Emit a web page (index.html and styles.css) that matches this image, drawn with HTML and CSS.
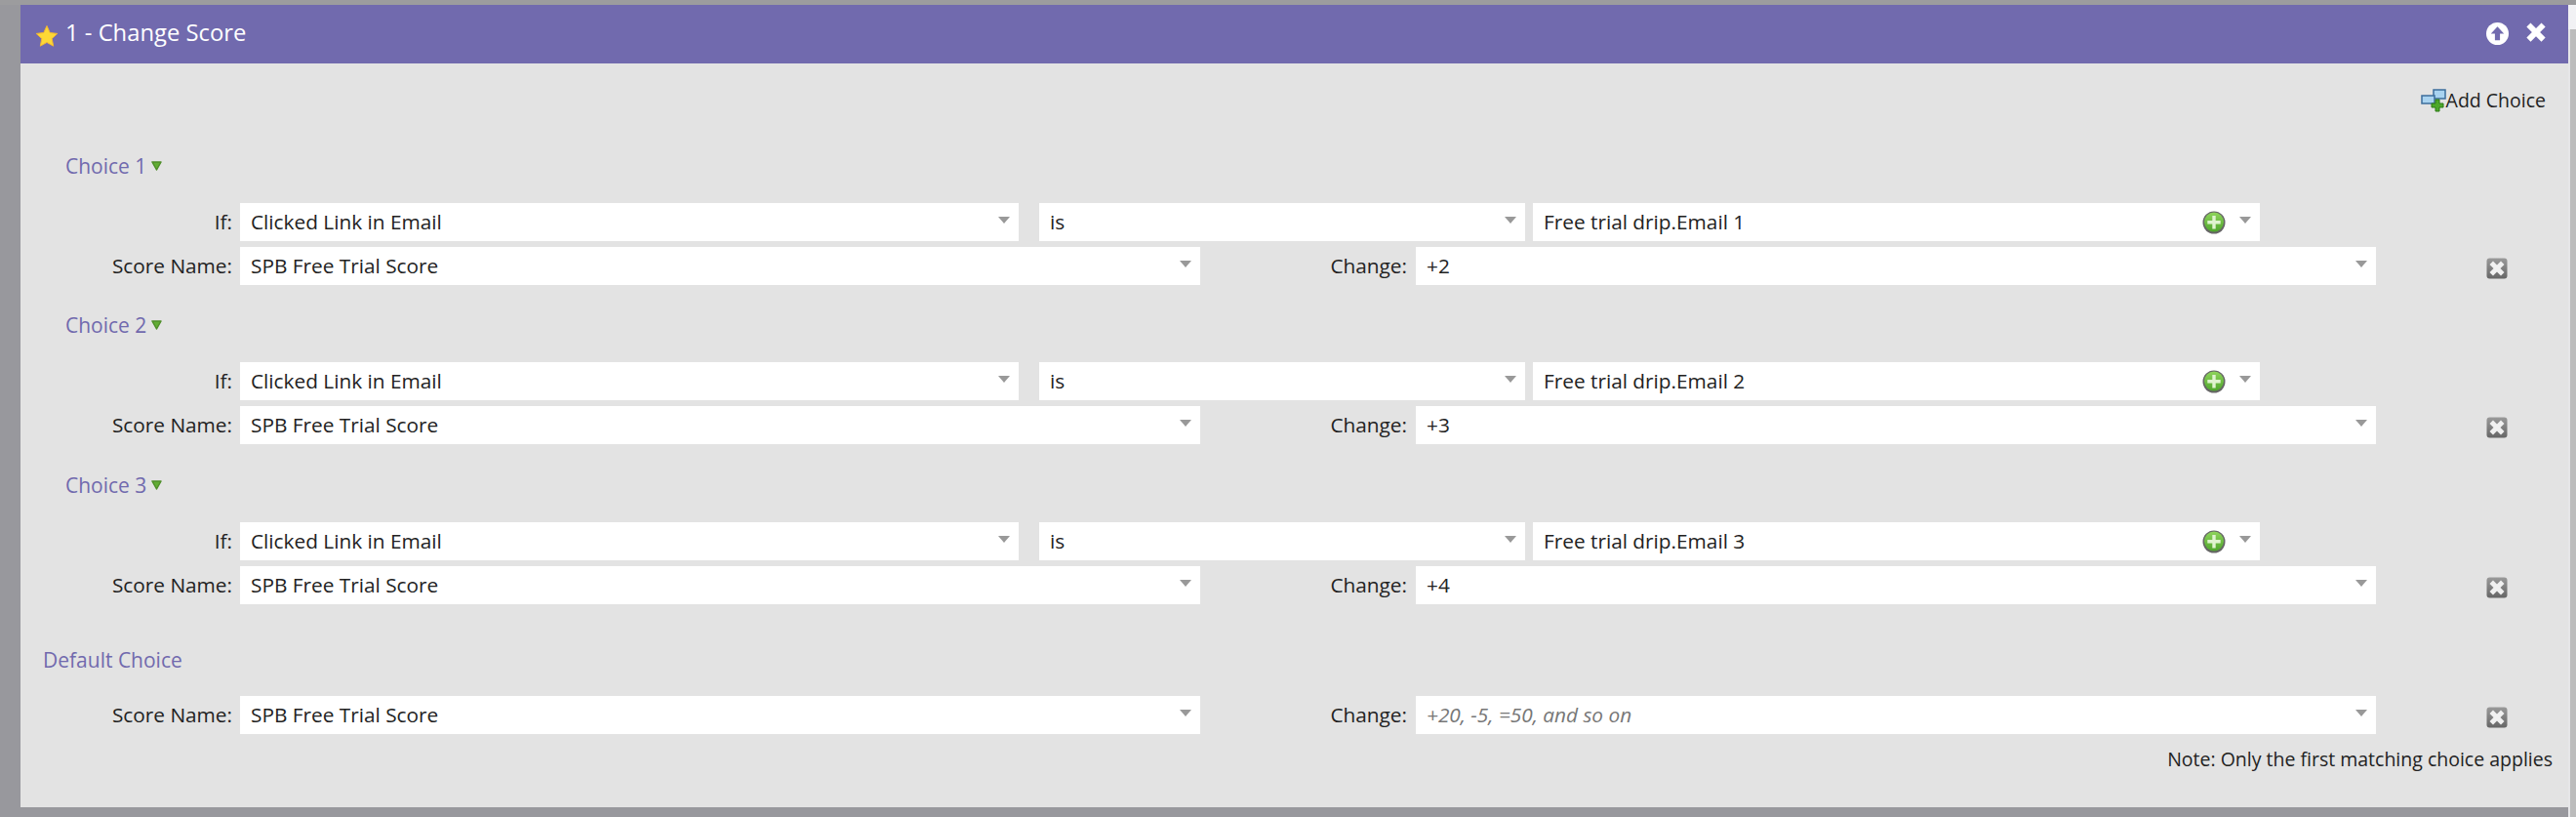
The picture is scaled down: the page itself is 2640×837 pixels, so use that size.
FILE: index.html
```html
<!DOCTYPE html>
<html lang="en">
<head>
<meta charset="utf-8">
<title>Change Score</title>
<link rel="stylesheet" href="styles.css">
</head>
<body>
<svg class="defs" width="0" height="0" aria-hidden="true">
  <defs>
    <linearGradient id="gPlus" x1="0" y1="0" x2="0" y2="1"><stop offset="0" stop-color="#8fd45c"/><stop offset="1" stop-color="#4fa62c"/></linearGradient>
    <linearGradient id="gX" x1="0" y1="0" x2="0" y2="1"><stop offset="0" stop-color="#9a9a9a"/><stop offset="1" stop-color="#666"/></linearGradient>
    <symbol id="caret" viewBox="0 0 12 7"><path d="M0 0H12L6 7Z" fill="#999"/></symbol>
    <symbol id="tri" viewBox="0 0 11 10"><path d="M1 1H10L5.500 9Z" fill="#62ad34" stroke="#4f8f2a" stroke-width="1.500" stroke-linejoin="round"/></symbol>
    <symbol id="plus" viewBox="0 0 24 24">
      <circle cx="12" cy="12" r="11.5" fill="#666"/>
      <circle cx="12" cy="11.5" r="10" fill="url(#gPlus)"/>
      <path d="M10.3 5h3.4v5h5v3.4h-5v5h-3.4v-5h-5v-3.4h5z" fill="#dff3cf"/>
    </symbol>
    <symbol id="del" viewBox="0 0 22 22">
      <rect x="0.5" y="0.5" width="21" height="21" rx="3" fill="url(#gX)"/>
      <path d="M7 3.5L11 7.5L15 3.5L18.5 7L14.5 11L18.5 15L15 18.5L11 14.5L7 18.5L3.5 15L7.5 11L3.5 7Z" fill="#f1f1f1"/>
    </symbol>
  </defs>
</svg>
<div class="topline"></div>
<div class="frame">
  <main class="panel">
    <header class="titlebar">
      <div class="title">
        <svg class="star" viewBox="0 0 24 24"><path d="M12 1.5l3.2 7 7.6.9-5.6 5.2 1.5 7.6L12 18.4l-6.700 3.800 1.500-7.600L1.200 9.400l7.600-.9z" fill="#fdd835" stroke="#f2b632" stroke-width="1"/></svg>
        <span>1 - Change Score</span>
      </div>
      <div class="actions">
        <svg class="act act-up" viewBox="0 0 24 24"><circle cx="12" cy="12" r="12" fill="#fff"/><path d="M12 4.500L19 12h-4.300v7H9.300V12H5z" fill="#716aae"/></svg>
        <svg class="act" viewBox="0 0 24 24"><path d="M6 1.500L12 7.500L18 1.500L22.500 6L16.500 12L22.500 18L18 22.500L12 16.500L6 22.500L1.500 18L7.500 12L1.500 6Z" fill="#fff"/></svg>
      </div>
    </header>
    <section class="content">
      <div class="addbar">
        <svg class="addicon" viewBox="0 0 26 24">
          <rect x="13" y="1" width="12" height="9" fill="#a9d3f0" stroke="#3c6e9c" stroke-width="1.500"/>
          <rect x="1" y="7" width="13" height="8" fill="#a9d3f0" stroke="#3c6e9c" stroke-width="1.500"/>
          <path d="M15 11h4v4h4v4h-4v4h-4v-4h-4v-4h4z" fill="#4da82b" stroke="#2d7a17"/>
        </svg>
        <span>Add Choice</span>
      </div>

      <div class="choices">
      <div class="choice">
        <div class="choicehead"><span>Choice 1</span><svg class="tri"><use href="#tri"/></svg></div>
        <div class="line">
          <label class="lab">If:</label>
          <div class="sel w-if"><span>Clicked Link in Email</span><svg class="caret"><use href="#caret"/></svg></div>
          <div class="sel w-is"><span>is</span><svg class="caret"><use href="#caret"/></svg></div>
          <div class="sel w-val"><span>Free trial drip.Email 1</span><svg class="plus"><use href="#plus"/></svg><svg class="caret"><use href="#caret"/></svg></div>
        </div>
        <div class="line line2">
          <label class="lab">Score Name:</label>
          <div class="sel w-score"><span>SPB Free Trial Score</span><svg class="caret"><use href="#caret"/></svg></div>
          <label class="lab2">Change:</label>
          <div class="sel w-chg"><span>+2</span><svg class="caret"><use href="#caret"/></svg></div>
          <svg class="del"><use href="#del"/></svg>
        </div>
      </div>

      <div class="choice">
        <div class="choicehead"><span>Choice 2</span><svg class="tri"><use href="#tri"/></svg></div>
        <div class="line">
          <label class="lab">If:</label>
          <div class="sel w-if"><span>Clicked Link in Email</span><svg class="caret"><use href="#caret"/></svg></div>
          <div class="sel w-is"><span>is</span><svg class="caret"><use href="#caret"/></svg></div>
          <div class="sel w-val"><span>Free trial drip.Email 2</span><svg class="plus"><use href="#plus"/></svg><svg class="caret"><use href="#caret"/></svg></div>
        </div>
        <div class="line line2">
          <label class="lab">Score Name:</label>
          <div class="sel w-score"><span>SPB Free Trial Score</span><svg class="caret"><use href="#caret"/></svg></div>
          <label class="lab2">Change:</label>
          <div class="sel w-chg"><span>+3</span><svg class="caret"><use href="#caret"/></svg></div>
          <svg class="del"><use href="#del"/></svg>
        </div>
      </div>

      <div class="choice">
        <div class="choicehead"><span>Choice 3</span><svg class="tri"><use href="#tri"/></svg></div>
        <div class="line">
          <label class="lab">If:</label>
          <div class="sel w-if"><span>Clicked Link in Email</span><svg class="caret"><use href="#caret"/></svg></div>
          <div class="sel w-is"><span>is</span><svg class="caret"><use href="#caret"/></svg></div>
          <div class="sel w-val"><span>Free trial drip.Email 3</span><svg class="plus"><use href="#plus"/></svg><svg class="caret"><use href="#caret"/></svg></div>
        </div>
        <div class="line line2">
          <label class="lab">Score Name:</label>
          <div class="sel w-score"><span>SPB Free Trial Score</span><svg class="caret"><use href="#caret"/></svg></div>
          <label class="lab2">Change:</label>
          <div class="sel w-chg"><span>+4</span><svg class="caret"><use href="#caret"/></svg></div>
          <svg class="del"><use href="#del"/></svg>
        </div>
      </div>
      </div>

      <div class="default">
        <div class="defaulthead">Default Choice</div>
        <div class="line">
          <label class="lab">Score Name:</label>
          <div class="sel w-score"><span>SPB Free Trial Score</span><svg class="caret"><use href="#caret"/></svg></div>
          <label class="lab2">Change:</label>
          <div class="sel w-chg"><span class="ph">+20, -5, =50, and so on</span><svg class="caret"><use href="#caret"/></svg></div>
          <svg class="del"><use href="#del"/></svg>
        </div>
      </div>
      <p class="note">Note: Only the first matching choice applies</p>
    </section>
  </main>
  <aside class="scrollstrip"><div class="scrollcap"></div></aside>
</div>
</body>
</html>
```
FILE: styles.css
```css
* { box-sizing: border-box; }
html, body { margin: 0; padding: 0; }
body {
  width: 2640px;
  height: 837px;
  overflow: hidden;
  background: #98989d;
  font-family: "Open Sans", "Noto Sans", sans-serif;
  font-size: 20.8px;
  color: #222;
}
.defs { display: block; height: 0; }
.topline { height: 5px; background: #9c9c9e; }
.frame { display: flex; align-items: flex-start; padding-left: 21px; }
.panel { background: #e3e3e3; width: 2611px; height: 822px; flex: none; }
.scrollstrip {
  width: 8px;
  height: 832px;
  flex: none;
  background: #bcbcbc;
  border-left: 2px solid #e6e6e8;
}
.scrollcap { height: 25px; margin-left: -2px; background: #f1f1f4; }
.titlebar {
  height: 60px;
  background: #716aae;
  color: #fff;
  display: flex;
  align-items: center;
  justify-content: space-between;
  padding: 0 22px 0 15px;
}
.title { display: flex; align-items: center; font-size: 23.8px; }
.title span { margin-left: 7px; position: relative; top: -2px; }
.star { width: 24px; height: 24px; margin-top: 4px; }
.actions { display: flex; align-items: center; gap: 17px; margin-top: -4px; }
.act { width: 22px; height: 22px; }
.act-up { width: 23px; height: 23px; margin-top: 2px; }
.addbar {
  display: flex;
  justify-content: flex-end;
  align-items: center;
  height: 28px;
  margin-top: 23px;
  padding-right: 23px;
  font-size: 19.5px;
}
.addicon { width: 26px; height: 24px; margin-top: 1px; }
.choices { margin-top: 40px; }
.choice { height: 163px; }
.choice + .choice + .choice { margin-top: 1px; }
.choicehead {
  color: #716aae;
  font-size: 21px;
  height: 28px;
  line-height: 28px;
  margin: 0 0 24px 46px;
  display: flex;
  align-items: center;
}
.choicehead span { width: 88px; white-space: nowrap; }
.tri { width: 11px; height: 10px; }
.line { display: flex; align-items: center; height: 39px; }
.line2 { margin-top: 6px; }
.lab { width: 217px; text-align: right; margin-right: 8px; position: relative; top: -1px; }
.lab2 { width: 212px; text-align: right; margin-right: 9px; position: relative; top: -1px; }
.sel {
  height: 39px;
  background: #fff;
  display: flex;
  align-items: center;
  padding: 0 9px 0 11px;
}
.sel > span { flex: 1; white-space: nowrap; line-height: 37px; margin-top: -1px; }
.caret { width: 12px; height: 7px; margin-top: -5px; flex: none; }
.w-if { width: 798px; margin-right: 21px; }
.w-is { width: 498px; margin-right: 8px; }
.w-val { width: 745px; }
.w-score { width: 984px; }
.w-chg { width: 984px; }
.plus { width: 24px; height: 24px; margin-right: 14px; flex: none; }
.del { width: 22px; height: 22px; margin-left: 113px; margin-top: 5px; flex: none; }
.ph { font-style: italic; color: #777; }
.default { margin-top: 16px; }
.defaulthead {
  color: #716aae;
  font-size: 21px;
  height: 28px;
  line-height: 28px;
  margin: 0 0 23px 23px;
}
.note { margin: 12px 0 0; padding-right: 16px; text-align: right; font-size: 19.5px; line-height: 28px; }
```
